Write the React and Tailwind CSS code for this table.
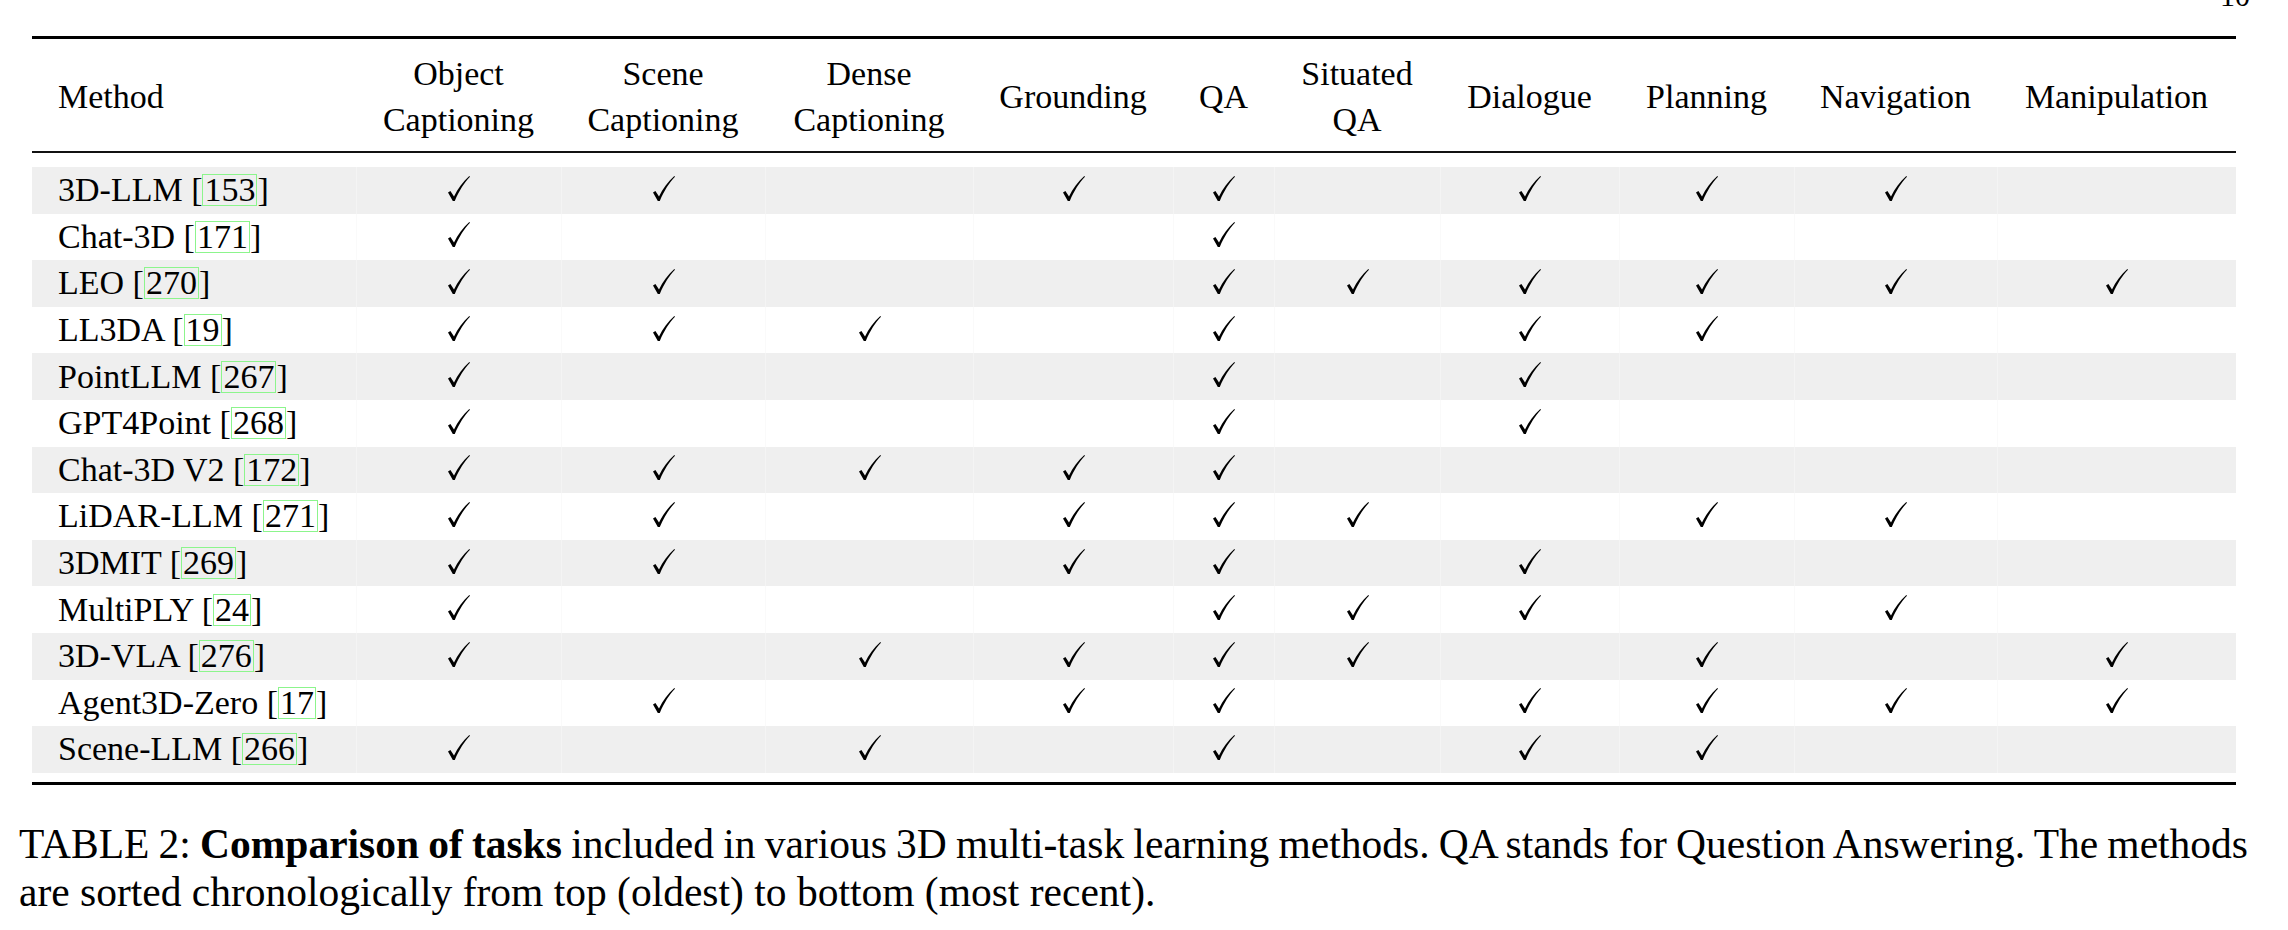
import React from 'react'

const rows = [
  { name: '3D-LLM', cite: '153', tasks: '1101101110' },
  { name: 'Chat-3D', cite: '171', tasks: '1000100000' },
  { name: 'LEO', cite: '270', tasks: '1100111111' },
  { name: 'LL3DA', cite: '19', tasks: '1110101100' },
  { name: 'PointLLM', cite: '267', tasks: '1000101000' },
  { name: 'GPT4Point', cite: '268', tasks: '1000101000' },
  { name: 'Chat-3D V2', cite: '172', tasks: '1111100000' },
  { name: 'LiDAR-LLM', cite: '271', tasks: '1101110110' },
  { name: '3DMIT', cite: '269', tasks: '1101101000' },
  { name: 'MultiPLY', cite: '24', tasks: '1000111010' },
  { name: '3D-VLA', cite: '276', tasks: '1011110101' },
  { name: 'Agent3D-Zero', cite: '17', tasks: '0101101111' },
  { name: 'Scene-LLM', cite: '266', tasks: '1010101100' },
]

const headers = [
  ['Object', 'Captioning'],
  ['Scene', 'Captioning'],
  ['Dense', 'Captioning'],
  ['Grounding'],
  ['QA'],
  ['Situated', 'QA'],
  ['Dialogue'],
  ['Planning'],
  ['Navigation'],
  ['Manipulation'],
]

const grid =
  'grid grid-cols-[324px_205px_204px_208px_200px_101px_166px_179px_175px_203px_239px]'

function Check() {
  return (
    <svg width="22" height="25" viewBox="0 0 22 25" className="mb-[4px]">
      <path
        d="M0 16.6 L2.4 15 L6 20.4 C9.7 13 15 5.5 21.3 0 L22 0.8 C16.3 6.7 11.4 14.3 6.8 25 L4.8 25 Z"
        fill="#000"
      />
    </svg>
  )
}

export default function App() {
  return (
    <div className="relative w-[2288px] h-[930px] overflow-hidden bg-white text-black font-['Liberation_Serif',serif]">
      <div className="absolute right-[38px] top-[-19px] text-[30px] leading-none">10</div>

      <div className="ml-[32px] pt-[36px] w-[2204px]">
        <div className="h-[3px] bg-black" />

        <div className={`${grid} h-[112px] pt-[3px] text-[34px] leading-[46px]`}>
          <div className="flex items-center pl-[26px]">Method</div>
          {headers.map((h, i) => (
            <div key={i} className="flex flex-col items-center justify-center text-center">
              {h.map((line) => (
                <span key={line}>{line}</span>
              ))}
            </div>
          ))}
        </div>

        <div className="h-[2px] bg-[#111]" />
        <div className="h-[14px]" />

        {rows.map((r, i) => (
          <div
            key={r.name}
            className={`${grid} h-[46.6px] text-[34px] leading-[44px] ${i % 2 === 0 ? 'bg-[#efefef]' : 'bg-white'}`}
          >
            <div className="flex items-center pl-[26px] whitespace-nowrap">
              <span>
                {r.name} [
                <span className="inline-block border border-[#8cf58c] leading-[30px] px-[1px]">{r.cite}</span>]
              </span>
            </div>
            {r.tasks.split('').map((t, j) => (
              <div key={j} className="flex items-center justify-center border-l border-l-[#f6f6f6]/60">
                {t === '1' && <Check />}
              </div>
            ))}
          </div>
        ))}

        <div className="h-[9px]" />
        <div className="h-[3px] bg-black" />
      </div>

      <div className="ml-[19px] mt-[35px] w-[2229px] text-[41.5px] leading-[48.5px]">
        <p className="text-justify [text-align-last:justify] whitespace-nowrap [word-spacing:-3px]">
          TABLE 2: <b>Comparison of tasks</b> included in various 3D multi-task learning methods. QA stands for Question Answering. The methods
        </p>
        <p>are sorted chronologically from top (oldest) to bottom (most recent).</p>
      </div>
    </div>
  )
}
